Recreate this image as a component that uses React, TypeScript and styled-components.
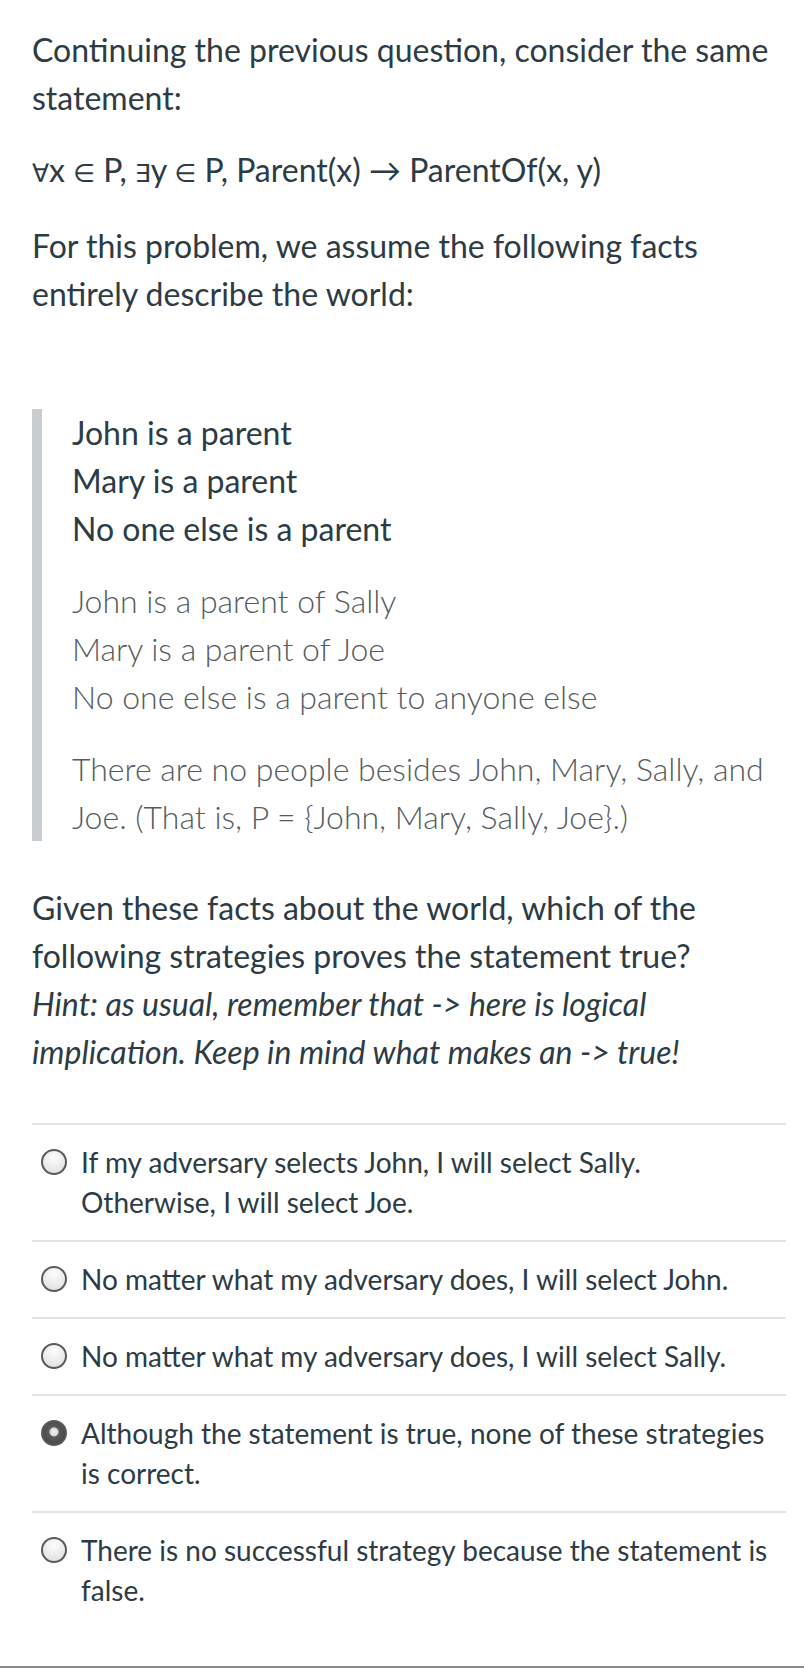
import styled, { createGlobalStyle } from "styled-components";

const GlobalStyle = createGlobalStyle`
  html, body {
    margin: 0;
    padding: 0;
    background: #ffffff;
  }
  body {
    font-family: Lato, "Open Sans", "DejaVu Sans", sans-serif;
    color: #2d3b45;
  }
`;

const Page = styled.div`
  padding: 26px 18px 0 32px;
  min-height: 1668px;
  box-sizing: border-box;
  border-bottom: 2px solid #8a8a8a;
`;

const Para = styled.p<{ $gap?: number }>`
  margin: 0 0 ${(p) => (p.$gap ?? 24)}px;
  font-size: 32px;
  line-height: 48px;
`;

const Formula = styled(Para)`
  .sym {
    font-family: "DejaVu Sans", sans-serif;
    font-size: 25px;
  }
`;

const Quote = styled.blockquote`
  margin: 91px 0 43px;
  border-left: 10px solid #c7cdd1;
  padding: 0 0 0 30px;
`;

const QuoteGroup = styled.p<{ $light?: boolean }>`
  margin: 0 0 24px;
  font-size: 32px;
  line-height: 48px;
  font-weight: ${(p) => (p.$light ? 300 : 400)};
  color: ${(p) => (p.$light ? "#555c61" : "#2d3b45")};
  &:last-child {
    margin-bottom: 0;
  }
`;

const Hint = styled.em`
  font-style: italic;
`;

const Answers = styled.div`
  margin-top: 47px;
  border-top: 2px solid #e1e3e4;
`;

const Answer = styled.label`
  display: flex;
  align-items: flex-start;
  padding: 17px 12px 18px 9px;
  border-bottom: 2px solid #e1e3e4;
  font-size: 28px;
  line-height: 40px;
  cursor: pointer;
  &:last-child {
    border-bottom: none;
  }
`;

const Radio = styled.span<{ $checked?: boolean }>`
  flex: 0 0 auto;
  width: 26px;
  height: 26px;
  margin: 7px 14px 0 0;
  border-radius: 50%;
  box-sizing: border-box;
  border: 2px solid #5a5a5a;
  background: ${(p) =>
    p.$checked
      ? "radial-gradient(circle at 50% 45%, #f2f2f2 0, #d8d8d8 4px, #5b5b5b 5px, #3d3d3d 100%)"
      : "radial-gradient(circle at 50% 30%, #fdfdfd 0, #e6e6e6 70%, #d2d2d2 100%)"};
`;

const AnswerText = styled.span`
  flex: 1;
`;

const answers = [
  "If my adversary selects John, I will select Sally. Otherwise, I will select Joe.",
  "No matter what my adversary does, I will select John.",
  "No matter what my adversary does, I will select Sally.",
  "Although the statement is true, none of these strategies is correct.",
  "There is no successful strategy because the statement is false.",
];

export default function App() {
  return (
    <>
      <GlobalStyle />
      <Page>
        <Para>Continuing the previous question, consider the same statement:</Para>
        <Formula>
          <span className="sym">∀</span>x <span className="sym">∈</span> P,{" "}
          <span className="sym">∃</span>y <span className="sym">∈</span> P, Parent(x) → ParentOf(x, y)
        </Formula>
        <Para $gap={0}>
          For this problem, we assume the following facts entirely describe the world:
        </Para>
        <Quote>
          <QuoteGroup>
            John is a parent
            <br />
            Mary is a parent
            <br />
            No one else is a parent
          </QuoteGroup>
          <QuoteGroup $light>
            John is a parent of Sally
            <br />
            Mary is a parent of Joe
            <br />
            No one else is a parent to anyone else
          </QuoteGroup>
          <QuoteGroup $light>
            {"There are no people besides John, Mary, Sally, and Joe. (That is, P = {John, Mary, Sally, Joe}.)"}
          </QuoteGroup>
        </Quote>
        <Para $gap={0}>
          Given these facts about the world, which of the following strategies proves the statement
          true?
          <br />
          <Hint>
            Hint: as usual, remember that -&gt; here is logical implication. Keep in mind what makes
            an -&gt; true!
          </Hint>
        </Para>
        <Answers>
          {answers.map((a, i) => (
            <Answer key={i}>
              <Radio $checked={i === 3} />
              <AnswerText>{a}</AnswerText>
            </Answer>
          ))}
        </Answers>
      </Page>
    </>
  );
}
